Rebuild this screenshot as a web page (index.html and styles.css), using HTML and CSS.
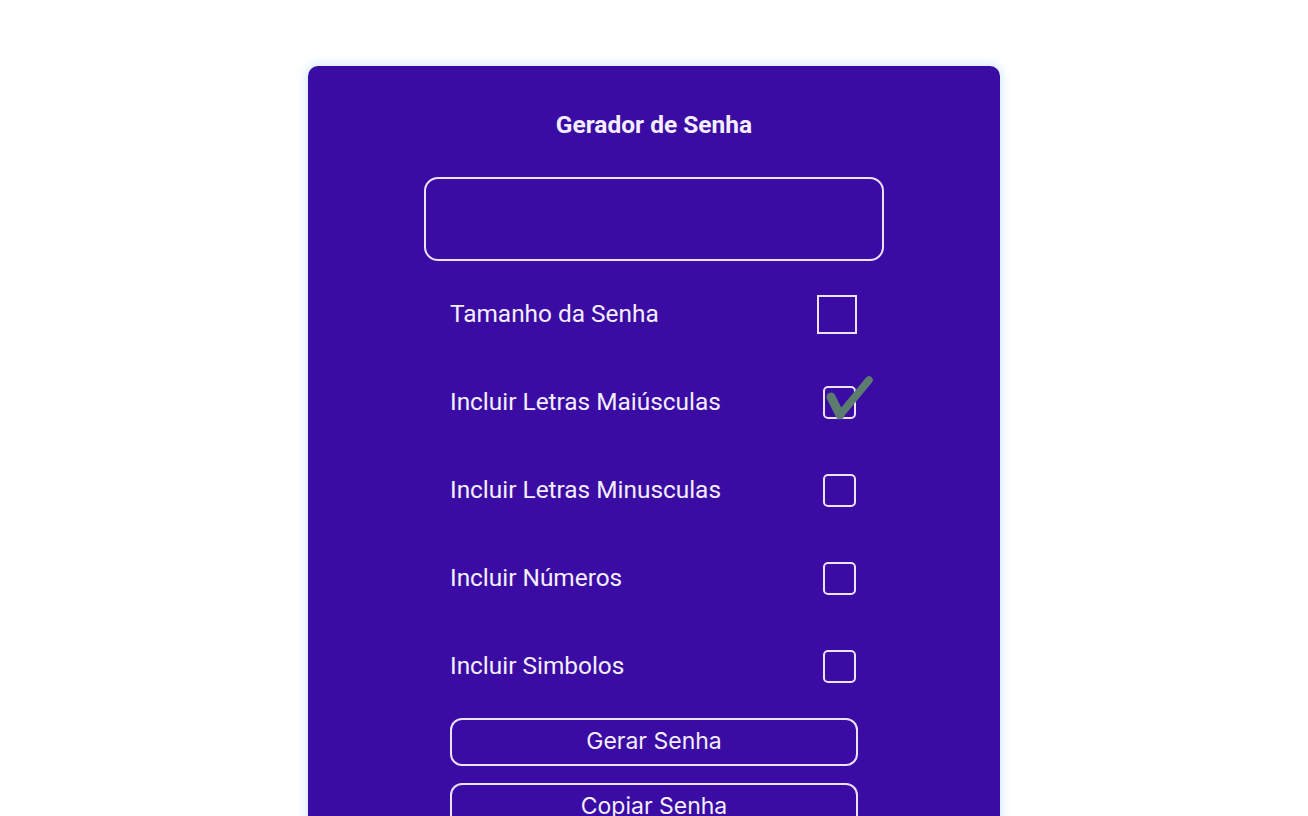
FILE: index.html
```html
<!DOCTYPE html>
<html lang="pt-BR">
<head>
<meta charset="utf-8">
<title>Gerador de Senha</title>
<link rel="stylesheet" href="styles.css">
</head>
<body>
<main class="card">
  <h1 class="title">Gerador de Senha</h1>
  <div class="output"></div>
  <div class="options">
    <label class="row">
      <span class="label">Tamanho da Senha</span>
      <span class="numbox"></span>
    </label>
    <label class="row">
      <span class="label">Incluir Letras Maiúsculas</span>
      <span class="check checked">
        <svg class="tick" viewBox="0 0 52 48" width="52" height="48" aria-hidden="true">
          <path d="M8 23 L17 41" stroke="#5d7c70" stroke-width="9" stroke-linecap="round" fill="none"/>
          <path d="M17 41 L46 6" stroke="#5d7c70" stroke-width="7.5" stroke-linecap="round" fill="none"/>
        </svg>
      </span>
    </label>
    <label class="row">
      <span class="label">Incluir Letras Minusculas</span>
      <span class="check"></span>
    </label>
    <label class="row">
      <span class="label">Incluir Números</span>
      <span class="check"></span>
    </label>
    <label class="row">
      <span class="label">Incluir Simbolos</span>
      <span class="check"></span>
    </label>
  </div>
  <div class="buttons">
    <button class="btn">Gerar Senha</button>
    <button class="btn">Copiar Senha</button>
  </div>
</main>
</body>
</html>
```

FILE: styles.css
```css
html, body {
  margin: 0;
  padding: 0;
  background: #ffffff;
  overflow: hidden;
}

body {
  font-family: Roboto, "Noto Sans", sans-serif;
}

.card {
  width: 692px;
  margin: 66px auto 0;
  background: #3a0ca3;
  border-radius: 10px;
  box-shadow: 0 0 8px 2px rgba(170, 215, 255, 0.5);
  padding: 44px 0 120px;
  display: flex;
  flex-direction: column;
  align-items: center;
  color: #f4eeff;
}

.title {
  margin: 0;
  font-size: 24.5px;
  line-height: 30px;
  font-weight: 700;
}

.output {
  margin-top: 37px;
  width: 460px;
  height: 84px;
  box-sizing: border-box;
  border: 2px solid #ece2ff;
  border-radius: 14px;
}

.options {
  margin-top: 9px;
  width: 408px;
  display: flex;
  flex-direction: column;
}

.row {
  height: 88px;
  display: flex;
  align-items: center;
  justify-content: space-between;
}

.label {
  font-size: 24.4px;
  line-height: 28px;
  margin-bottom: 1px;
}

.numbox {
  width: 40px;
  height: 39px;
  box-sizing: border-box;
  border: 2px solid #ece2ff;
  margin-right: 1px;
}

.check {
  position: relative;
  width: 33px;
  height: 33px;
  box-sizing: border-box;
  border: 2px solid #ece2ff;
  border-radius: 5px;
  margin-right: 2px;
}

.tick {
  position: absolute;
  left: -2px;
  top: -14px;
}

.buttons {
  margin-top: 8px;
  width: 408px;
  display: flex;
  flex-direction: column;
  gap: 17px;
}

.btn {
  height: 48px;
  box-sizing: border-box;
  background: transparent;
  border: 2px solid #ece2ff;
  border-radius: 12px;
  color: #f4eeff;
  font-family: Inter, "Noto Sans", sans-serif;
  font-size: 23px;
  padding: 0 0 2px;
}
```
